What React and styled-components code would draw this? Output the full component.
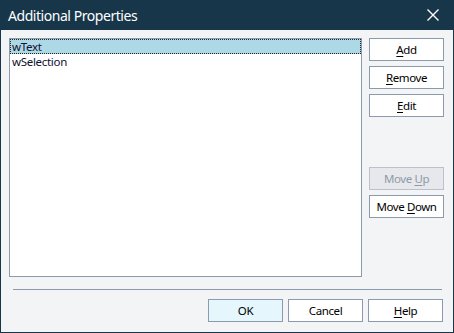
import React from "react";
import styled, { createGlobalStyle } from "styled-components";

const Global = createGlobalStyle`
  html, body { margin: 0; padding: 0; background: #17364a; }
  body { font-family: "Noto Sans", "Liberation Sans", sans-serif; }
  * { box-sizing: border-box; }
`;

const Window = styled.div`
  width: 454px;
  height: 333px;
  border: 1px solid #17364a;
  border-top: none;
  background: #f3f4f6;
  display: flex;
  flex-direction: column;
`;

const TitleBar = styled.div`
  height: 30px;
  background: #17364a;
  margin: 0 -1px;
  display: flex;
  align-items: center;
  justify-content: space-between;
  padding: 0 15px 0 8px;
  color: #fff;
  font-size: 14px;
  font-family: "Noto Sans", sans-serif;
  letter-spacing: -0.45px;
`;

const Close = styled.svg`
  width: 12px;
  height: 12px;
  display: block;
`;

const Body = styled.div`
  flex: 1;
  display: flex;
  flex-direction: column;
  padding: 8px 9px 0 8px;
`;

const Main = styled.div`
  display: flex;
  gap: 7px;
`;

const List = styled.div`
  flex: 1;
  height: 239px;
  background: #fff;
  border: 1px solid #8c9aae;
  display: flex;
  flex-direction: column;
`;

const Item = styled.div`
  height: 15px;
  line-height: 13px;
  font-size: 11.5px;
  letter-spacing: -0.3px;
  color: #101030;
  padding-left: 1px;
  overflow: hidden;
  border: 1px dotted ${(p) => (p.$selected ? "#222" : "transparent")};
  background: ${(p) => (p.$selected ? "#add8e6" : "transparent")};
`;

const Side = styled.div`
  width: 75px;
  display: flex;
  flex-direction: column;
  gap: 5px;
`;

const Spacer = styled.div`
  height: 40px;
`;

const Btn = styled.button`
  width: 75px;
  height: 23px;
  padding: 0;
  margin: 0;
  font-size: 11.5px;
  font-family: "Noto Sans", sans-serif;
  letter-spacing: -0.4px;
  color: ${(p) => (p.disabled ? "#8e9aa8" : "#000")};
  background: ${(p) => (p.disabled ? "#e6e8eb" : p.$default ? "#e5f6fd" : "#fff")};
  border: 1px solid ${(p) => (p.disabled ? "#b9c1cc" : "#8c9aae")};
  display: flex;
  align-items: center;
  justify-content: center;
  line-height: 1;
  u { text-decoration-thickness: 1px; text-underline-offset: 2px; }
`;

const Separator = styled.div`
  height: 1px;
  background: #8c9aae;
  margin: 12px 2px 0 4px;
`;

const Footer = styled.div`
  display: flex;
  justify-content: flex-end;
  gap: 5px;
  padding: 9px 1px 0 0;
`;

export default function App() {
  return (
    <>
      <Global />
      <Window>
        <TitleBar>
          <span>Additional Properties</span>
          <Close viewBox="0 0 12 12">
            <path d="M0.5 0.5 L11.5 11.5 M11.5 0.5 L0.5 11.5" stroke="#fff" strokeWidth="1.4" />
          </Close>
        </TitleBar>
        <Body>
          <Main>
            <List>
              <Item $selected>wText</Item>
              <Item>wSelection</Item>
            </List>
            <Side>
              <Btn><span><u>A</u>dd</span></Btn>
              <Btn><span><u>R</u>emove</span></Btn>
              <Btn><span><u>E</u>dit</span></Btn>
              <Spacer />
              <Btn disabled><span>Move <u>U</u>p</span></Btn>
              <Btn><span>Move <u>D</u>own</span></Btn>
            </Side>
          </Main>
          <Separator />
          <Footer>
            <Btn $default>OK</Btn>
            <Btn>Cancel</Btn>
            <Btn><span><u>H</u>elp</span></Btn>
          </Footer>
        </Body>
      </Window>
    </>
  );
}
